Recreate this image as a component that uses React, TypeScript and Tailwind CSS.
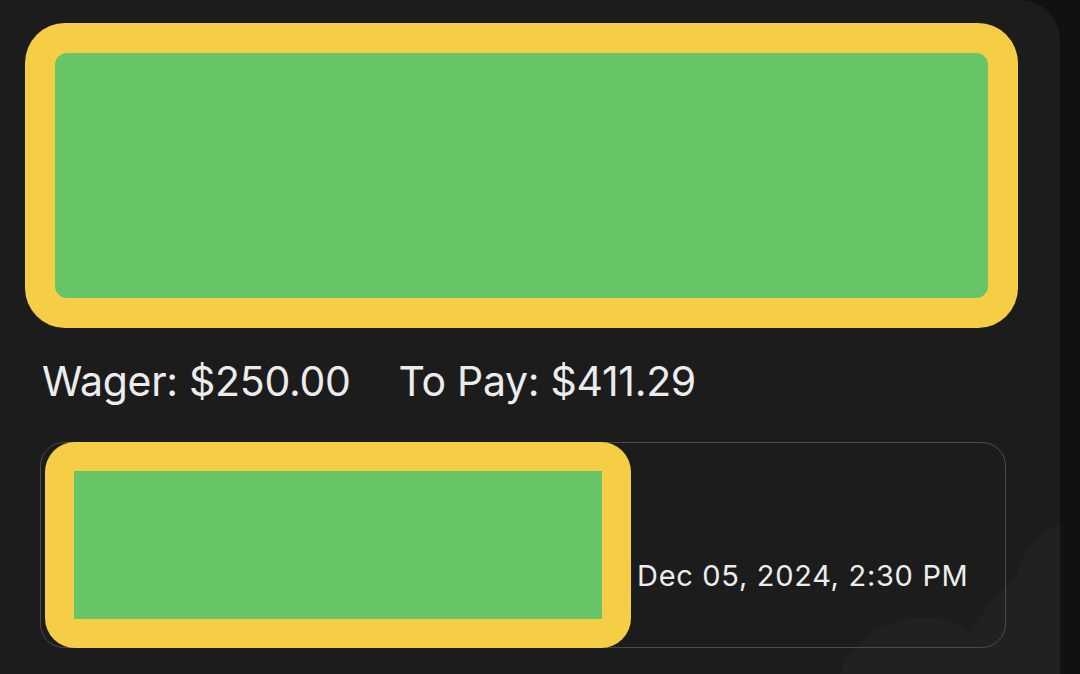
import React from 'react';

// faint brand mark that sits behind the bet card's lower corner
function Watermark() {
  return (
    <svg
      className="absolute right-0 bottom-0 pointer-events-none"
      width="260"
      height="180"
      viewBox="0 0 260 180"
      fill="#212121"
    >
      <path d="M40 180 C 60 120, 140 110, 170 140 C 190 100, 230 70, 260 60 L 260 180 Z" />
      <path d="M215 95 C 215 60, 240 40, 260 30 L 260 110 C 240 115, 218 112, 215 95 Z" />
    </svg>
  );
}

export default function App() {
  return (
    <div className="w-full h-[674px] bg-[#111111] flex overflow-hidden font-['Inter','Liberation_Sans',sans-serif]">
      <div className="relative w-[1060px] h-full bg-[#1c1c1c] rounded-tr-[40px] pt-[23px] pl-[25px] pr-[42px]">
        <Watermark />

        {/* headline slot */}
        <div className="relative h-[305px] rounded-[40px] bg-[#f5ce45] p-[30px]">
          <div className="w-full h-full rounded-[12px] bg-[#66c566]" />
        </div>

        <div className="relative mt-[28px] ml-[17px] flex gap-[48px] text-[41px] leading-[50px] text-[#ececec] tracking-[-0.3px]">
          <span>Wager: $250.00</span>
          <span>To Pay: $411.29</span>
        </div>

        <div className="relative mt-[36px] ml-[15px] w-[966px] h-[206px] rounded-[24px] border border-[#4a4a4a] flex">
          <div className="-my-px ml-[4px] w-[586px] rounded-[30px] bg-[#f5ce45] p-[29px]">
            <div className="w-full h-full bg-[#66c566]" />
          </div>
          <span className="self-end mb-[54px] ml-[6px] text-[29px] leading-[34px] text-[#ececec] tracking-[0.7px]">
            Dec 05, 2024, 2:30 PM
          </span>
        </div>
      </div>
    </div>
  );
}
